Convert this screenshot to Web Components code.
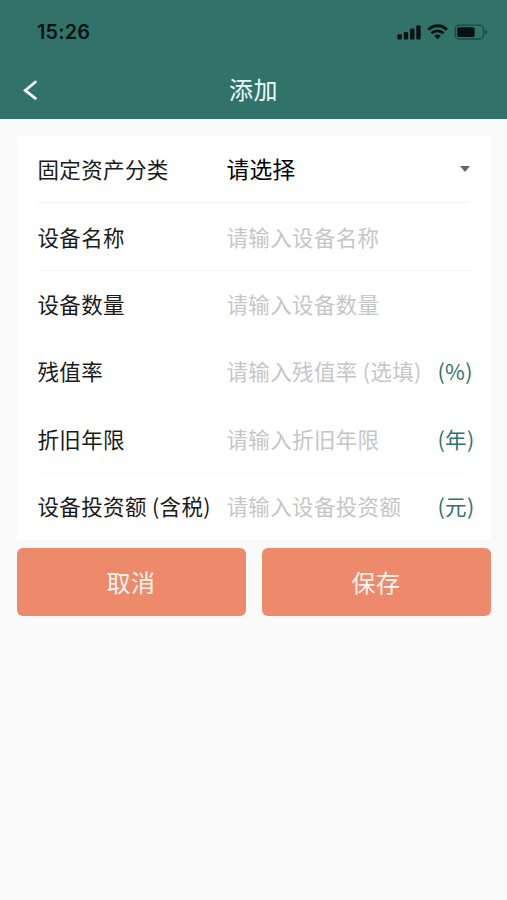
<!DOCTYPE html>
<html lang="zh-CN">
<head>
<meta charset="UTF-8">
<meta name="viewport" content="width=device-width, initial-scale=1.0">
<title>添加</title>
<style>
    body {
        margin: 0;
        min-height: 100vh;
        background: #fafafa;
        font-family: "Noto Sans CJK SC", sans-serif;
        overflow: hidden;
    }
</style>
</head>
<body>
<asset-page></asset-page>

<script>
// Phone status bar: clock, signal, wifi, battery
class StatusBar extends HTMLElement {
    constructor() {
        super();
        this.attachShadow({ mode: 'open' });
    }

    connectedCallback() {
        this.shadowRoot.innerHTML = `
            <style>
                :host {
                    display: flex;
                    justify-content: space-between;
                    align-items: center;
                    height: 60px;
                    box-sizing: border-box;
                    padding: 4px 19px 0 37px;
                    color: #04110f;
                }

                .time {
                    font: 600 19.8px/24px Inter, sans-serif;
                    letter-spacing: 0.2px;
                }

                svg {
                    display: block;
                }
            </style>
            <span class="time">${this.getAttribute('time')}</span>
            <svg width="91" height="18" viewBox="0 0 91 18" fill="currentColor">
                <rect x="0.4" y="11.3" width="4.4" height="5.3" rx="1.3"/>
                <rect x="6.8" y="8.9" width="4.4" height="7.7" rx="1.3"/>
                <rect x="13.1" y="5.6" width="4.4" height="11" rx="1.3"/>
                <rect x="19.3" y="2.3" width="4.4" height="14.3" rx="1.3"/>
                <g fill="none" stroke="currentColor" stroke-width="2.9">
                    <path d="M31.4 6.6 C36.6 1.4 44.6 1.4 49.8 6.6"/>
                    <path d="M34.6 10.3 C38 7 43.2 7 46.6 10.3"/>
                </g>
                <path d="M37.3 12.8 C39.2 11.1 42 11.1 43.9 12.8 L40.6 16.2 Z"/>
                <rect x="58.2" y="2.2" width="28.4" height="13.8" rx="4" fill="none" stroke="currentColor" stroke-opacity=".45" stroke-width="1.3"/>
                <rect x="60.2" y="4.2" width="17.4" height="9.8" rx="1.6"/>
                <path d="M88.2 6.6 C90.6 7.4 90.6 10.8 88.2 11.6 Z" opacity=".45"/>
            </svg>
        `;
    }
}

class NavBar extends HTMLElement {
    constructor() {
        super();
        this.attachShadow({ mode: 'open' });
    }

    connectedCallback() {
        this.shadowRoot.innerHTML = `
            <style>
                :host {
                    display: grid;
                    grid-template-columns: 60px 1fr 60px;
                    align-items: center;
                    height: 58px;
                    color: #fff;
                }

                svg {
                    display: block;
                    margin-left: 22px;
                }

                .title {
                    text-align: center;
                    font-size: 24px;
                    line-height: 36px;
                    letter-spacing: 0.4px;
                    color: #edfaf8;
                }
            </style>
            <svg width="16" height="22" viewBox="0 0 16 22" fill="none" stroke="currentColor" stroke-width="2.7" stroke-linecap="round" stroke-linejoin="miter">
                <path d="M13.4 4 L3.2 12.4 L13.4 20.4"/>
            </svg>
            <div class="title"><slot></slot></div>
        `;
    }
}

// One form line: label, then a select or an input, then an optional unit
class FormRow extends HTMLElement {
    constructor() {
        super();
        this.attachShadow({ mode: 'open' });
    }

    connectedCallback() {
        const hint = this.getAttribute('hint');
        const unit = this.getAttribute('unit');
        const isSelect = this.hasAttribute('select');

        this.shadowRoot.innerHTML = `
            <style>
                :host {
                    display: flex;
                    align-items: center;
                    height: 67.4px;
                    box-sizing: border-box;
                    margin: 0 21px;
                    padding-bottom: 0.8px;
                    border-bottom: 1px solid var(--line, #fbfbfb);
                    font-size: 21.5px;
                    letter-spacing: 0.35px;
                    color: #1a1a1a;
                }

                .label {
                    flex: 0 0 189px;
                    white-space: nowrap;
                }

                input {
                    flex: 0 0 211px;
                    width: 211px;
                    height: 40px;
                    padding: 0;
                    border: none;
                    outline: none;
                    background: none;
                    font: inherit;
                    letter-spacing: inherit;
                    color: #1a1a1a;
                }

                input::placeholder {
                    color: #c6c6c6;
                    opacity: 1;
                }

                .value {
                    flex: 1;
                    font-size: 22.8px;
                    letter-spacing: 0.2px;
                    color: #000;
                }

                .arrow {
                    border: 5.5px solid transparent;
                    border-top: 6px solid #666;
                    border-bottom: none;
                    margin-top: 1px;
                }

                .unit {
                    white-space: nowrap;
                    color: #31736a;
                }
            </style>
            <span class="label"><slot></slot></span>
            ${isSelect ? `
                <span class="value">${hint}</span>
                <span class="arrow"></span>
            ` : `
                <input type="text" placeholder="${hint}">
                ${unit ? `<span class="unit">${unit}</span>` : ''}
            `}
        `;
    }
}

class FormCard extends HTMLElement {
    constructor() {
        super();
        this.attachShadow({ mode: 'open' });
    }

    connectedCallback() {
        this.shadowRoot.innerHTML = `
            <style>
                :host {
                    display: block;
                    background: #fff;
                    border-radius: 4px;
                }
            </style>
            <slot></slot>
        `;
    }
}

class ActionButton extends HTMLElement {
    constructor() {
        super();
        this.attachShadow({ mode: 'open' });
    }

    connectedCallback() {
        this.shadowRoot.innerHTML = `
            <style>
                :host {
                    display: block;
                    flex: 1;
                }

                button {
                    display: block;
                    width: 100%;
                    height: 67.5px;
                    padding: 0;
                    border: none;
                    border-radius: 6px;
                    background: #ed8a6c;
                    color: #fff5f0;
                    font: inherit;
                    font-size: 24px;
                    letter-spacing: 0.4px;
                    cursor: pointer;
                }
            </style>
            <button type="button"><slot></slot></button>
        `;
    }
}

class AssetPage extends HTMLElement {
    constructor() {
        super();
        this.attachShadow({ mode: 'open' });
    }

    connectedCallback() {
        this.shadowRoot.innerHTML = `
            <style>
                :host {
                    display: block;
                }

                header {
                    height: 119.4px;
                    background: #31736a;
                }

                main {
                    padding: 16.6px 16.5px 0;
                }

                .strong {
                    --line: #f2f2f2;
                }

                .last {
                    --line: transparent;
                }

                .actions {
                    display: flex;
                    gap: 16px;
                    margin-top: 7.8px;
                }
            </style>
            <header>
                <status-bar time="15:26"></status-bar>
                <nav-bar>添加</nav-bar>
            </header>
            <main>
                <form-card>
                    <form-row class="strong" select hint="请选择">固定资产分类</form-row>
                    <form-row class="strong" hint="请输入设备名称">设备名称</form-row>
                    <form-row hint="请输入设备数量">设备数量</form-row>
                    <form-row hint="请输入残值率 (选填)" unit="(%)">残值率</form-row>
                    <form-row hint="请输入折旧年限" unit="(年)">折旧年限</form-row>
                    <form-row class="last" hint="请输入设备投资额" unit="(元)">设备投资额 (含税)</form-row>
                </form-card>
                <div class="actions">
                    <action-button>取消</action-button>
                    <action-button>保存</action-button>
                </div>
            </main>
        `;
    }
}

customElements.define('status-bar', StatusBar);
customElements.define('nav-bar', NavBar);
customElements.define('form-row', FormRow);
customElements.define('form-card', FormCard);
customElements.define('action-button', ActionButton);
customElements.define('asset-page', AssetPage);
</script>
</body>
</html>
